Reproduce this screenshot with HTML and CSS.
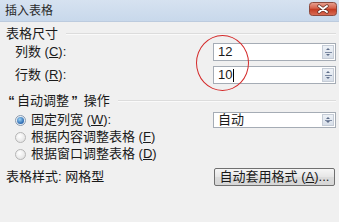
FILE: index.html
```html
<!DOCTYPE html>
<html lang="zh-CN">
<head>
    <meta charset="UTF-8">
    <title>插入表格</title>
    <link rel="stylesheet" href="styles.css">
</head>
<body>
<div class="dialog">
    <div class="titlebar">
        <span class="title">插入表格</span>
        <span class="close">
            <svg width="28" height="14" viewBox="0 0 28 14">
                <defs>
                    <linearGradient id="cg" x1="0" y1="0" x2="0" y2="1">
                        <stop offset="0" stop-color="#e8a393"/>
                        <stop offset="0.45" stop-color="#d4604a"/>
                        <stop offset="0.5" stop-color="#c2391f"/>
                        <stop offset="1" stop-color="#d9705a"/>
                    </linearGradient>
                </defs>
                <rect x="0.5" y="0.5" width="27" height="13" rx="3" fill="url(#cg)" stroke="#8c4a3e"/>
                <path d="M10 4 L18 10 M18 4 L10 10" stroke="#5a2a22" stroke-width="3.4" stroke-linecap="round"/>
                <path d="M10 4 L18 10 M18 4 L10 10" stroke="#ffffff" stroke-width="2" stroke-linecap="round"/>
            </svg>
        </span>
    </div>

    <div class="content">
        <div class="group-head"><span>表格尺寸</span><span class="rule"></span></div>

        <div class="row row-cols">
            <span class="label indent">列数 (<u>C</u>):</span>
            <div class="spin-box">
                <span class="val">12</span>
                <span class="spinner"></span>
            </div>
        </div>

        <div class="row row-rows">
            <span class="label indent">行数 (<u>R</u>):</span>
            <div class="spin-box">
                <span class="val">10<span class="caret"></span></span>
                <span class="spinner"></span>
            </div>
        </div>

        <div class="group-head head-auto"><span><span class="q">“</span>自动调整<span class="q">”</span> 操作</span><span class="rule"></span></div>

        <div class="row radio-row first">
            <span class="radio checked"></span>
            <span class="label">固定列宽 (<u>W</u>):</span>
            <div class="spin-box short">
                <span class="val">自动</span>
                <span class="spinner"></span>
            </div>
        </div>
        <div class="row radio-row">
            <span class="radio"></span>
            <span class="label">根据内容调整表格 (<u>F</u>)</span>
        </div>
        <div class="row radio-row">
            <span class="radio"></span>
            <span class="label">根据窗口调整表格 (<u>D</u>)</span>
        </div>

        <div class="row row-style">
            <span class="label">表格样式: 网格型</span>
            <button class="btn">自动套用格式 (<u>A</u>)...</button>
        </div>
    </div>

    <!-- 标注圈 -->
    <div class="mark"></div>
</div>
</body>
</html>
```

FILE: styles.css
```css
body {
    margin: 0;
    font-family: "Liberation Sans", "Noto Sans CJK SC", sans-serif;
    font-size: 13px;
    line-height: 16px;
    color: #1a1a1a;
    background: #f0f0f0;
}
.dialog {
    position: relative;
    width: 339px;
    height: 222px;
    overflow: hidden;
    background: #f0f0f0;
}
.titlebar {
    height: 22px;
    display: flex;
    align-items: center;
    justify-content: space-between;
    padding: 0 2px 0 5px;
    background: linear-gradient(#d6e2f0, #c8d8eb);
    border-bottom: 1px solid #bccbde;
    box-sizing: border-box;
}
.title {
    font-size: 12px;
    color: #2a2a2a;
}
.close {
    display: flex;
    margin-top: -4px;
}
.content {
    padding: 2px 3px 0 6px;
}
.group-head {
    height: 19px;
    display: flex;
    align-items: center;
}
.group-head .rule {
    flex: 1;
    margin-left: 8px;
    height: 0;
    border-top: 1px solid #dcdcdc;
    border-bottom: 1px solid #fafafa;
}
.head-auto {
    margin-top: 8px;
    height: 18px;
}
.q {
    display: inline-block;
    width: 11px;
    text-align: center;
    font-weight: bold;
}
.row {
    display: flex;
    align-items: center;
    justify-content: space-between;
    height: 18px;
}
.row-rows {
    margin-top: 5px;
}
.label {
    white-space: nowrap;
}
.label u {
    text-decoration: underline;
}
.indent {
    margin-left: 9px;
}
.spin-box {
    width: 123px;
    height: 18px;
    box-sizing: border-box;
    border: 1px solid #a5acb5;
    background: #fff;
    display: flex;
    align-items: center;
    justify-content: space-between;
}
.spin-box.short {
    height: 16px;
}
.val {
    padding-left: 4px;
    font-size: 13px;
    display: flex;
    align-items: center;
}
.caret {
    display: inline-block;
    width: 1px;
    height: 13px;
    background: #000;
    margin-left: 1px;
}
.spinner {
    width: 12px;
    height: 14px;
    margin-right: 1px;
    box-sizing: border-box;
    border: 1px solid #c5ccd6;
    background:
        linear-gradient(#7c8aa3, #7c8aa3) no-repeat 2px 6px / 7px 1px,
        linear-gradient(#eef2f7, #d8dfe9);
    position: relative;
}
.spin-box.short .spinner {
    height: 12px;
    background:
        linear-gradient(#7c8aa3, #7c8aa3) no-repeat 2px 5px / 7px 1px,
        linear-gradient(#eef2f7, #d8dfe9);
}
.spinner::before,
.spinner::after {
    content: "";
    position: absolute;
    left: 3px;
    border-left: 2px solid transparent;
    border-right: 2px solid transparent;
}
.spinner::before {
    top: 2px;
    border-bottom: 2px solid #5d6c88;
}
.spinner::after {
    bottom: 2px;
    border-top: 2px solid #5d6c88;
}
.radio-row {
    height: 16px;
    justify-content: flex-start;
    margin-top: 1px;
}
.radio-row.first {
    margin-top: 2px;
}
.radio-row .spin-box {
    margin-left: auto;
}
.radio {
    flex: none;
    width: 11px;
    height: 11px;
    box-sizing: border-box;
    border-radius: 50%;
    border: 1px solid #b6b6b6;
    background: radial-gradient(circle at 40% 35%, #ffffff, #dcdcdc);
    margin: 0 5px 0 9px;
    position: relative;
}
.radio.checked {
    border-color: #8a9bb0;
    background: #e8eef4;
}
.radio.checked::after {
    content: "";
    position: absolute;
    left: 1px;
    top: 1px;
    width: 7px;
    height: 7px;
    border-radius: 50%;
    background: radial-gradient(circle at 40% 35%, #9cd3f5, #2a68b0 70%, #1e4f8a);
}
.row-style {
    margin-top: 6px;
}
.btn {
    width: 121px;
    height: 18px;
    margin-right: 1px;
    padding: 0;
    font-family: inherit;
    font-size: 13px;
    color: #1a1a1a;
    border: 1px solid #707070;
    border-radius: 2px;
    background: linear-gradient(#f6f6f6, #e6e6e6 50%, #dcdcdc 51%, #d6d6d6);
    line-height: 16px;
    white-space: nowrap;
}
.mark {
    position: absolute;
    left: 196px;
    top: 35px;
    width: 53px;
    height: 56px;
    box-sizing: border-box;
    border: 1.5px solid #d42a2a;
    border-radius: 50%;
}
```
